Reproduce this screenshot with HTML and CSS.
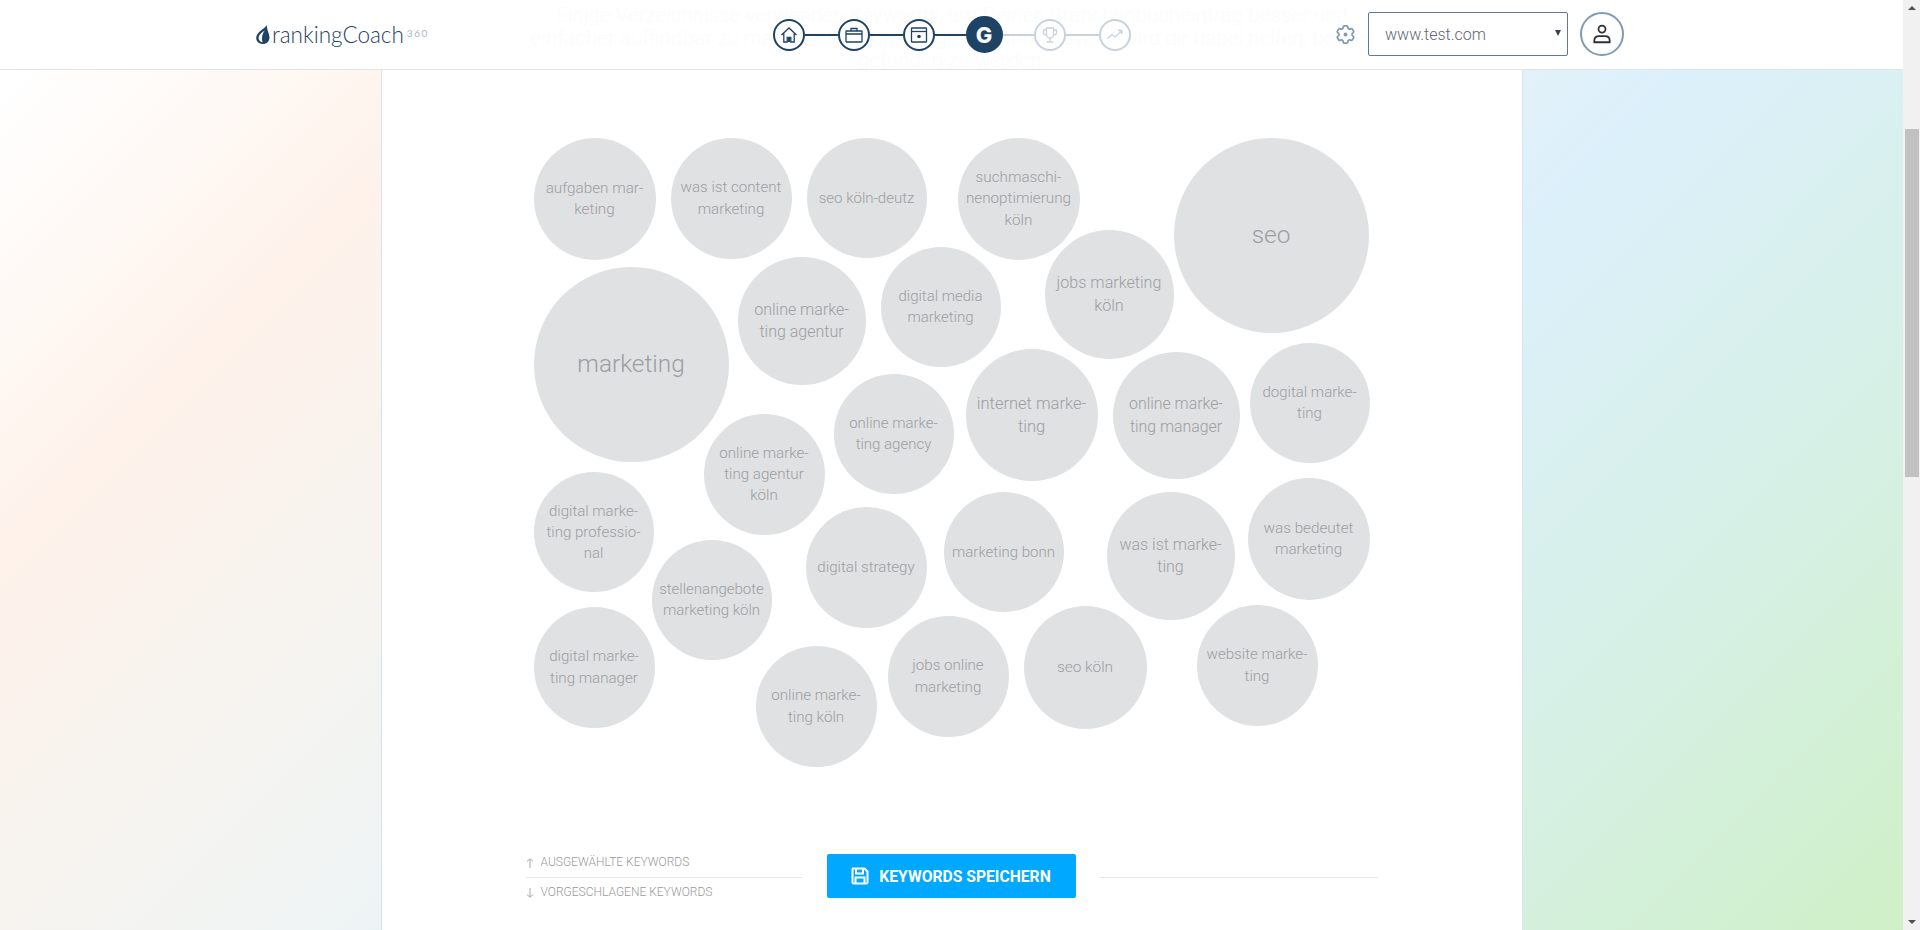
FILE: index.html
```html
<!DOCTYPE html>
<html lang="de">
<head>
<meta charset="utf-8">
<title>rankingCoach 360 – Keywords</title>
<link rel="stylesheet" href="styles.css">
</head>
<body>
<div class="page">
  <header class="topbar">
    <p class="intro">Einige Verzeichnisse verwenden Keywords, um Deinen Branchenbucheintrag besser und<br>einfacher auffindbar zu machen. Die sorgfältige Keywordauswahl wird dir dabei helfen, besser<br>gefunden zu werden.</p>
    <div class="brand">
      <svg class="brand-drop" viewBox="0 0 14 19"><path fill="#1f4364" fill-rule="evenodd" d="M11 0C9 3.500.5 7 .2 12.800.1 16.400 3 19 6.800 19c3.900 0 6.700-2.700 6.700-6.500C13.500 8 10.500 5 11 0zM8.800 5.500C6.300 8.500 5.200 12.500 6.500 17.500 3.200 16.500 2 14 2.800 11.500 3.600 9 6.300 7 8.800 5.500z"/></svg>
      <span class="brand-name">rankingCoach</span><span class="brand-sup">360</span>
    </div>
    <nav class="stepper">
      <span class="step"><svg viewBox="0 0 20 20"><path d="M2.500 10 10 3l7.500 7M4.800 8.500V17h3.400v-4.500h3.600V17h3.400V8.500"/><path class="solid" d="M9 13h2v4H9z"/></svg></span>
      <span class="link"></span>
      <span class="step"><svg viewBox="0 0 20 20"><rect x="2" y="6" width="16" height="11" rx=".5"/><path d="M7 6V3.500h6V6M2 9h16"/></svg></span>
      <span class="link"></span>
      <span class="step"><svg viewBox="0 0 20 20"><rect x="2.500" y="3" width="15" height="14" rx=".5"/><path d="M2.500 6.500h15"/><circle class="solid" cx="10" cy="11.500" r="1.800"/></svg></span>
      <span class="link short"></span>
      <span class="step current">G</span>
      <span class="link short off"></span>
      <span class="step off"><svg viewBox="0 0 20 20"><path d="M6.500 3h7v6.500a3.500 3.500 0 0 1-7 0zM6.500 5H3.500v2.500c0 1.500 1.300 2.500 3 2.500M13.500 5h3v2.500c0 1.500-1.300 2.500-3 2.500M10 13v3M6.500 17h7"/></svg></span>
      <span class="link off"></span>
      <span class="step off"><svg viewBox="0 0 20 20"><path d="M2.500 13.500 7 9.500l3 2.500 6.500-6M13 5.500h3.800v3.500"/></svg></span>
    </nav>
    <div class="tools">
      <svg class="gear" viewBox="0 0 24 24"><path d="M9.594 3.940c.09-.542.56-.94 1.110-.94h2.593c.55 0 1.020.398 1.110.94l.213 1.281c.063.374.313.686.645.870.074.04.147.083.22.127.324.196.72.257 1.075.124l1.217-.456a1.125 1.125 0 0 1 1.370.49l1.296 2.247a1.125 1.125 0 0 1-.26 1.431l-1.003.827c-.293.24-.438.613-.431.992a6.759 6.759 0 0 1 0 .255c-.007.378.138.75.43.99l1.005.828c.424.35.534.954.26 1.430l-1.298 2.247a1.125 1.125 0 0 1-1.369.491l-1.217-.456c-.355-.133-.75-.072-1.076.124a6.570 6.570 0 0 1-.22.128c-.331.183-.581.495-.644.869l-.213 1.280c-.09.543-.56.941-1.110.941h-2.594c-.55 0-1.020-.398-1.110-.94l-.213-1.281c-.062-.374-.312-.686-.644-.87a6.520 6.520 0 0 1-.22-.127c-.325-.196-.72-.257-1.076-.124l-1.217.456a1.125 1.125 0 0 1-1.369-.49l-1.297-2.247a1.125 1.125 0 0 1 .26-1.431l1.004-.827c.292-.24.437-.613.43-.992a6.932 6.932 0 0 1 0-.255c.007-.378-.138-.75-.43-.99l-1.004-.828a1.125 1.125 0 0 1-.26-1.430l1.297-2.247a1.125 1.125 0 0 1 1.370-.491l1.216.456c.356.133.751.072 1.076-.124.072-.044.146-.087.22-.128.332-.183.582-.495.644-.869z"/><circle class="solid" cx="12" cy="12" r="2"/></svg>
      <div class="site-select"><span>www.test.com</span><i class="caret"></i></div>
      <span class="avatar"><svg viewBox="0 0 20 20"><circle cx="10" cy="5.500" r="3.200"/><path d="M3 17.500v-1.500c0-2.600 2-4 4.500-4h5c2.500 0 4.500 1.400 4.500 4v1.500z"/></svg></span>
    </div>
  </header>

  <main class="panel">
    <section class="cloud">
      <div class="bubble" style="--x:0;--y:0;--d:122"><span>aufgaben mar-<br>keting</span></div>
      <div class="bubble" style="--x:137;--y:0;--d:121"><span>was ist content<br>marketing</span></div>
      <div class="bubble" style="--x:273;--y:0;--d:120"><span>seo köln-deutz</span></div>
      <div class="bubble" style="--x:424;--y:0;--d:122"><span>suchmaschi-<br>nenoptimierung<br>köln</span></div>
      <div class="bubble" style="--x:640;--y:0;--d:195"><span>seo</span></div>
      <div class="bubble" style="--x:0;--y:129;--d:195"><span>marketing</span></div>
      <div class="bubble" style="--x:204;--y:119;--d:128"><span>online marke-<br>ting agentur</span></div>
      <div class="bubble" style="--x:347;--y:109;--d:120"><span>digital media<br>marketing</span></div>
      <div class="bubble" style="--x:511;--y:92;--d:129"><span>jobs marketing<br>köln</span></div>
      <div class="bubble" style="--x:432;--y:211;--d:132"><span>internet marke-<br>ting</span></div>
      <div class="bubble" style="--x:579;--y:214;--d:127"><span>online marke-<br>ting manager</span></div>
      <div class="bubble" style="--x:716;--y:205;--d:120"><span>dogital marke-<br>ting</span></div>
      <div class="bubble" style="--x:300;--y:236;--d:120"><span>online marke-<br>ting agency</span></div>
      <div class="bubble" style="--x:170;--y:276;--d:121"><span>online marke-<br>ting agentur<br>köln</span></div>
      <div class="bubble" style="--x:0;--y:334;--d:120"><span>digital marke-<br>ting professio-<br>nal</span></div>
      <div class="bubble" style="--x:118;--y:402;--d:120"><span>stellenangebote<br>marketing köln</span></div>
      <div class="bubble" style="--x:272;--y:369;--d:121"><span>digital strategy</span></div>
      <div class="bubble" style="--x:410;--y:354;--d:120"><span>marketing bonn</span></div>
      <div class="bubble" style="--x:573;--y:354;--d:128"><span>was ist marke-<br>ting</span></div>
      <div class="bubble" style="--x:714;--y:340;--d:122"><span>was bedeutet<br>marketing</span></div>
      <div class="bubble" style="--x:0;--y:469;--d:121"><span>digital marke-<br>ting manager</span></div>
      <div class="bubble" style="--x:222;--y:508;--d:121"><span>online marke-<br>ting köln</span></div>
      <div class="bubble" style="--x:354;--y:478;--d:121"><span>jobs online<br>marketing</span></div>
      <div class="bubble" style="--x:490;--y:468;--d:123"><span>seo köln</span></div>
      <div class="bubble" style="--x:663;--y:467;--d:121"><span>website marke-<br>ting</span></div>
    </section>

    <section class="actions">
      <div class="legend">
        <div class="legend-item"><svg viewBox="0 0 8 10"><path d="M4 10V1M1 3.500 4 .8l3 2.700"/></svg>Ausgewählte Keywords</div>
        <div class="legend-item"><svg viewBox="0 0 8 10"><path d="M4 0v9M1 6.500 4 9.200l3-2.700"/></svg>Vorgeschlagene Keywords</div>
      </div>
      <button class="save" type="button">
        <svg viewBox="0 0 18 18"><path d="M2 1.500h11.500l3 3V15a1.500 1.500 0 0 1-1.500 1.500H3A1.500 1.500 0 0 1 1.500 15V2zM5 2v4.500h7V2M4.500 16.500V10.500h9v6"/></svg>
        Keywords speichern
      </button>
      <div class="rule"></div>
    </section>
  </main>
</div>
<aside class="scrollbar">
  <i class="arrow up"></i>
  <div class="track"><div class="thumb"></div></div>
  <i class="arrow down"></i>
</aside>
</body>
</html>
```

FILE: styles.css
```css
* { box-sizing: border-box; }

html, body {
  margin: 0;
  height: 930px;
  overflow: hidden;
}

body {
  display: flex;
  font-family: Roboto, "Liberation Sans", sans-serif;
  font-weight: 300;
}

.page {
  flex: 1;
  min-width: 0;
  display: flex;
  flex-direction: column;
  background: linear-gradient(135deg, #fff 0%, #fff 3%, #fef2ea 20%, #eff4f4 44%, #dcf0fb 62%, #d6f0e4 82%, #cff0c7 100%);
}

/* Header */
.topbar {
  position: relative;
  flex: none;
  height: 70px;
  overflow: hidden;
  display: grid;
  grid-template-columns: 1fr auto 1fr;
  align-items: center;
  background: #fff;
  border-bottom: 1px solid #e0e3ea;
}

.intro {
  position: absolute;
  top: 4px;
  left: 382px;
  width: 1140px;
  margin: 0;
  font-size: 20.700px;
  line-height: 22.500px;
  text-align: center;
  color: #fcfcfd;
  white-space: nowrap;
}

.brand {
  position: relative;
  display: flex;
  align-items: center;
  padding-left: 256px;
  color: #1f4364;
}

.brand-drop { width: 14px; height: 19px; margin-right: 2px; }
.brand-name { font-family: Lato, sans-serif; font-weight: 300; font-size: 22.500px; }
.brand-sup {
  align-self: flex-start;
  margin: 6px 0 0 3px;
  font-family: Lato, sans-serif;
  font-size: 10px;
  font-weight: 400;
  letter-spacing: 1.500px;
  color: #aeb6be;
}

.stepper { position: relative; display: flex; align-items: center; }

.step {
  width: 32px;
  height: 32px;
  display: flex;
  align-items: center;
  justify-content: center;
  border: 2px solid #1f4364;
  border-radius: 50%;
  background: #fff;
}

.step svg {
  width: 20px;
  height: 20px;
  fill: none;
  stroke: #1f4364;
  stroke-width: 1.300;
}

.step .solid { fill: #1f4364; stroke: none; }
.step.off { border-color: #c8d2de; }
.step.off svg { stroke: #c8d2de; }

.step.current {
  width: 37px;
  height: 37px;
  background: #1f4364;
  color: #fff;
  font-family: Inter, sans-serif;
  font-size: 22px;
  font-weight: 800;
  line-height: 1;
}

.link { width: 33px; height: 2px; background: #1f4364; }
.link.short { width: 31px; }
.link.off { background: #c8d2de; }

.tools {
  position: relative;
  display: flex;
  align-items: center;
  justify-content: flex-end;
  gap: 12px;
  margin-top: -1px;
  padding-right: 279px;
}

.gear { width: 23px; height: 23px; margin-right: -1px; fill: none; stroke: #7f9ab5; stroke-width: 1.800; }
.gear .solid { fill: #7f9ab5; stroke: none; }

.site-select {
  width: 200px;
  height: 44px;
  display: flex;
  align-items: center;
  justify-content: space-between;
  padding: 0 6px 0 16px;
  border: 1px solid #5d7a94;
  border-radius: 2px;
  font-size: 16px;
  color: #5f6570;
}

.caret {
  width: 0;
  height: 0;
  margin-bottom: 3px;
  border-left: 3px solid transparent;
  border-right: 3px solid transparent;
  border-top: 6px solid #3c4248;
}

.avatar {
  width: 44px;
  height: 44px;
  display: flex;
  align-items: center;
  justify-content: center;
  border: 2px solid #7f9ab5;
  border-radius: 50%;
}

.avatar svg { width: 22px; height: 22px; fill: none; stroke: #2d3236; stroke-width: 1.600; }

/* Content panel */
.panel {
  flex: 1;
  width: 1142px;
  margin: 0 auto;
  padding: 68px 144px 0;
  background: #fff;
  border-left: 1px solid #d8e5ea;
  border-right: 1px solid #d8e5ea;
}

.cloud {
  position: relative;
  height: 630px;
  margin-left: 8px;
}

.bubble {
  position: absolute;
  left: calc(var(--x) * 1px);
  top: calc(var(--y) * 1px);
  width: calc(var(--d) * 1px);
  height: calc(var(--d) * 1px);
  display: flex;
  align-items: center;
  justify-content: center;
  border-radius: 50%;
  background: #e0e1e3;
  color: #9c9ea1;
  font-size: calc(var(--d) * .125px);
  line-height: 1.4;
  text-align: center;
  white-space: nowrap;
}

.actions {
  display: grid;
  grid-template-columns: 277px 249px 1fr;
  grid-template-rows: 44px;
  column-gap: 24px;
  align-items: center;
  margin-top: 86px;
}

.legend {
  display: flex;
  flex-direction: column;
  justify-content: center;
  margin-top: 2px;
}

.legend-item {
  display: flex;
  align-items: center;
  gap: 7px;
  height: 29px;
  font-size: 12px;
  text-transform: uppercase;
  color: #9a9a9a;
}

.legend-item:first-child { height: 30px; border-bottom: 1px solid #e6e8ee; }
.legend-item svg { width: 8px; height: 10px; fill: none; stroke: #a8a8a8; stroke-width: 1; margin-top: 2px; }

.save {
  height: 44px;
  display: flex;
  align-items: center;
  justify-content: center;
  gap: 10px;
  padding: 0;
  border: 0;
  border-radius: 2px;
  background: #00a9ff;
  color: #fff;
  font: 700 15.700px Roboto, sans-serif;
  text-transform: uppercase;
}

.save svg { width: 18px; height: 18px; fill: none; stroke: #fff; stroke-width: 2; }

.rule { height: 1px; margin-top: 2px; background: #e6e8ee; }

/* Scrollbar */
.scrollbar {
  flex: none;
  width: 17px;
  display: flex;
  flex-direction: column;
  align-items: center;
  background: #f1f1f1;
}

.arrow { flex: none; width: 0; height: 0; margin: 6px 0; border-left: 4px solid transparent; border-right: 4px solid transparent; }
.arrow.up { border-bottom: 4px solid #505050; }
.arrow.down { border-top: 4px solid #505050; }

.track { flex: 1; width: 100%; padding: 113px 1px 0 2px; }
.thumb { height: 348px; background: #c1c1c1; }
```
